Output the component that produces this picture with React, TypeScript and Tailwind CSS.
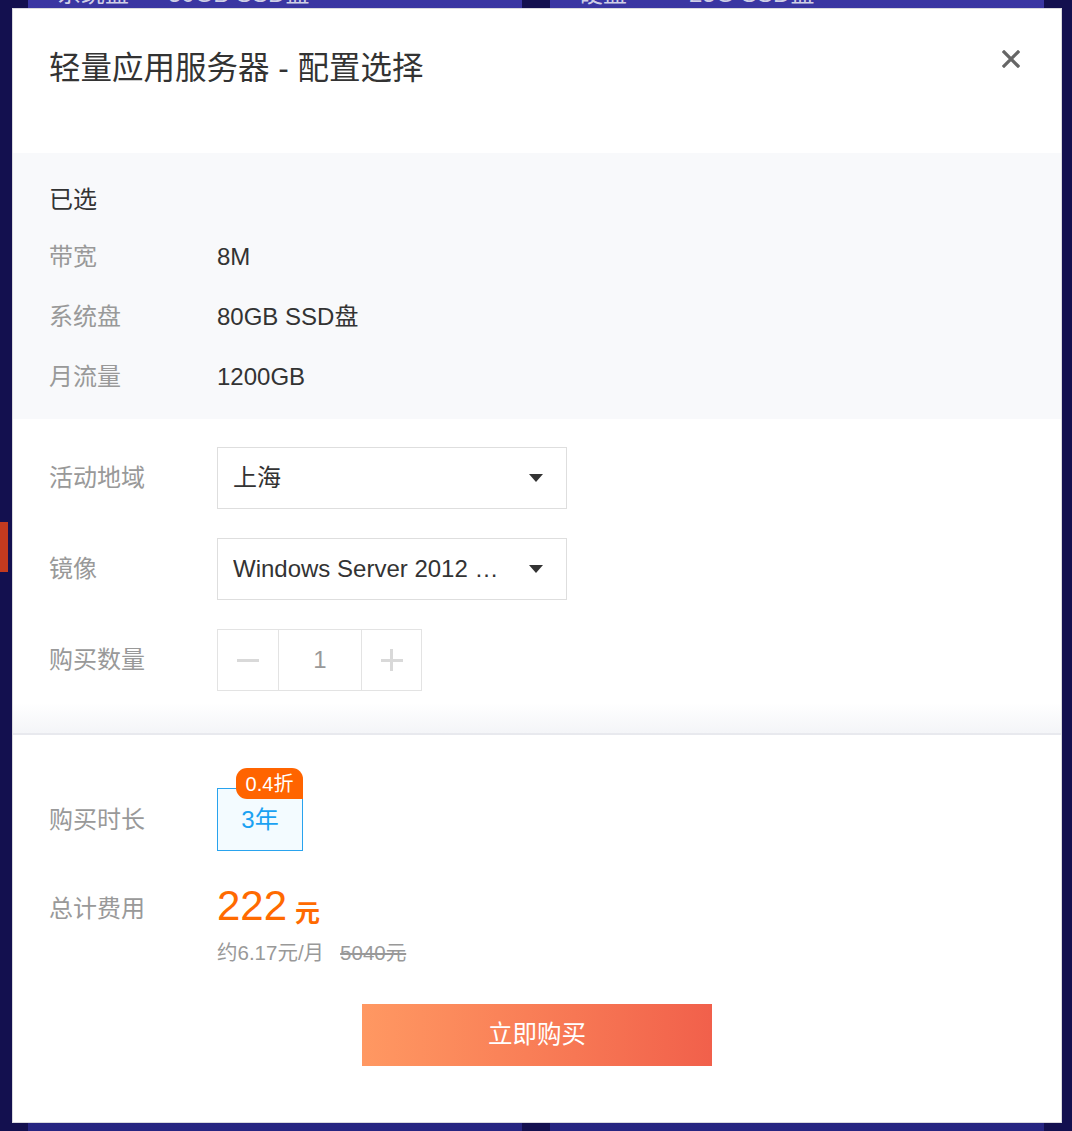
import { useState } from 'react';

const font = { fontFamily: '"Liberation Sans", "Noto Sans CJK SC", sans-serif' };

function Caret() {
  return (
    <svg width="14" height="8" viewBox="0 0 14 8" className="shrink-0">
      <path d="M0 0 L14 0 L7 8 Z" fill="#333" />
    </svg>
  );
}

function Select({ value }: { value: string }) {
  return (
    <div className="w-[350px] h-[62px] border border-[#dedede] bg-white flex items-center pl-[15px] pr-[23px]">
      <div className="w-[272px] truncate text-[24px] text-[#333]">{value}</div>
      <div className="flex-1" />
      <Caret />
    </div>
  );
}

export default function App() {
  const [count, setCount] = useState(1);

  return (
    <div className="relative w-full h-[1131px] overflow-hidden bg-[#13104f]" style={font}>
      {/* page behind the dialog */}
      <div className="flex h-full px-[28px] gap-[28px]">
        <div className="w-[495px] h-full bg-gradient-to-b from-[#3a36a2] to-[#262581]">
          <div className="flex mt-[-21px] pl-[29px] text-[24px] leading-[30px] text-[#cfcfe6]">
            <span className="w-[111px]">系统盘</span>
            <span>50GB SSD盘</span>
          </div>
        </div>
        <div className="w-[495px] h-full bg-gradient-to-b from-[#3a36a2] to-[#262581]">
          <div className="flex mt-[-21px] pl-[29px] text-[24px] leading-[30px] text-[#cfcfe6]">
            <span className="w-[110px]">硬盘</span>
            <span>25G SSD盘</span>
          </div>
        </div>
      </div>
      <div className="absolute left-0 top-[522px] w-[8px] h-[50px] bg-[#c23a1f]" />

      {/* dialog */}
      <div className="absolute left-[12px] top-[8px] w-[1050px] h-[1115px] bg-white border border-[#d9d9de] flex flex-col">
        <div className="relative h-[144px] pl-[36px] pt-[40px]">
          <h1 className="text-[31.5px] leading-[38px] text-[#333] font-normal">轻量应用服务器 - 配置选择</h1>
          <button className="absolute right-[41px] top-[41px] w-[18px] h-[18px]">
            <svg width="18" height="18" viewBox="0 0 18 18">
              <path d="M2 2 L16 16 M16 2 L2 16" stroke="#666" strokeWidth="3.2" strokeLinecap="square" />
            </svg>
          </button>
        </div>

        <div className="bg-[#f8f9fb] pl-[36px] pt-[20px] pb-[12px] text-[24px]">
          <div className="h-[54px] flex items-center text-[#333]">已选</div>
          {[
            ['带宽', '8M'],
            ['系统盘', '80GB SSD盘'],
            ['月流量', '1200GB'],
          ].map(([k, v]) => (
            <div key={k} className="h-[60px] flex items-center">
              <span className="w-[168px] text-[#999]">{k}</span>
              <span className="text-[#333]">{v}</span>
            </div>
          ))}
        </div>

        <div className="pl-[36px] pt-[28px] pb-[12px] flex flex-col gap-[29px] text-[24px]">
          <div className="flex items-center">
            <span className="w-[168px] text-[#999]">活动地域</span>
            <Select value="上海" />
          </div>
          <div className="flex items-center">
            <span className="w-[168px] text-[#999]">镜像</span>
            <Select value="Windows Server 2012 R2 数据中心版 64位中文版" />
          </div>
          <div className="flex items-center">
            <span className="w-[168px] text-[#999]">购买数量</span>
            <div className="flex h-[62px] border border-[#e3e3e3]">
              <button
                className="w-[61px] flex items-center justify-center border-r border-[#e3e3e3]"
                onClick={() => setCount(Math.max(1, count - 1))}
              >
                <span className="block w-[22px] h-[3px] bg-[#d9d9d9]" />
              </button>
              <div className="w-[82px] flex items-center justify-center text-[#999]">{count}</div>
              <button
                className="w-[60px] flex items-center justify-center border-l border-[#e3e3e3] relative"
                onClick={() => setCount(count + 1)}
              >
                <span className="block w-[22px] h-[3px] bg-[#d9d9d9]" />
                <span className="absolute block w-[3px] h-[22px] bg-[#d9d9d9]" />
              </button>
            </div>
          </div>
        </div>
        <div className="h-[32px] bg-gradient-to-b from-white to-[#f4f5f8] border-b-2 border-[#e8e9ee]" />

        <div className="pl-[36px] pt-[53px] text-[24px]">
          <div className="flex items-center">
            <span className="w-[168px] text-[#999]">购买时长</span>
            <div className="relative w-[86px] h-[63px] border border-[#29a3ee] bg-[#f3fbff] flex items-center justify-center text-[#1aa1f2]">
              3年
              <div className="absolute right-[-1px] top-[-21px] w-[67px] h-[31px] bg-[#ff6400] rounded-tl-[11px] rounded-tr-[11px] rounded-bl-[11px] flex items-center justify-center text-white text-[20px]">
                0.4折
              </div>
            </div>
          </div>

          <div className="flex items-start mt-[31px]">
            <span className="w-[168px] text-[#999] leading-[46px] pt-[4px]">总计费用</span>
            <div>
              <div className="flex items-end text-[#ff6a00] h-[46px]">
                <span className="text-[42px] leading-[44px]">222</span>
                <span className="ml-[8px] text-[25px] leading-[30px] font-bold">元</span>
              </div>
              <div className="mt-[11px] text-[20.5px] leading-[28px] text-[#999]">
                约6.17元/月
                <span className="ml-[16px] line-through">5040元</span>
              </div>
            </div>
          </div>
        </div>

        <div className="flex justify-center mt-[37px]">
          <button className="w-[350px] h-[62px] bg-gradient-to-r from-[#ff9862] to-[#f1604b] text-white text-[24.5px]">
            立即购买
          </button>
        </div>
      </div>
    </div>
  );
}
